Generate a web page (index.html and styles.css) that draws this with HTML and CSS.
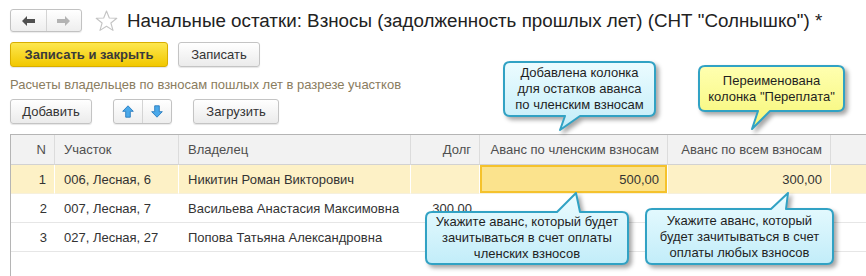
FILE: index.html
```html
<!DOCTYPE html>
<html lang="ru">
<head>
    <meta charset="UTF-8">
    <title>Начальные остатки: Взносы</title>
    <link rel="stylesheet" href="styles.css">
</head>
<body>
    <svg class="defs" width="0" height="0">
        <defs>
            <linearGradient id="fillBlue" x1="0" y1="0" x2="0" y2="1">
                <stop offset="0" stop-color="#ecfcff"/>
                <stop offset="1" stop-color="#c2edf9"/>
            </linearGradient>
            <linearGradient id="fillYellow" x1="0" y1="0" x2="0" y2="1">
                <stop offset="0" stop-color="#ffffb0"/>
                <stop offset="1" stop-color="#f6f677"/>
            </linearGradient>
        </defs>
    </svg>

    <div class="form">
        <div class="title-bar">
            <div class="btn-group nav">
                <span class="seg">
                    <svg width="13" height="10" viewBox="0 0 13 10"><path d="M0 5 L5 0 V3 H13 V7 H5 V10 Z" fill="#505050"/></svg>
                </span>
                <span class="seg">
                    <svg width="13" height="10" viewBox="0 0 13 10"><path d="M13 5 L8 0 V3 H0 V7 H8 V10 Z" fill="#b3b3b3"/></svg>
                </span>
            </div>
            <svg class="star" width="23" height="22" viewBox="0 0 23 22">
                <path d="M11.5 1 L14.3 8 L21.8 8.3 L15.9 13 L18 20.4 L11.5 16.2 L5 20.4 L7.1 13 L1.2 8.3 L8.7 8 Z" fill="#fff" stroke="#c4c4c4" stroke-width="1.1" stroke-linejoin="round"/>
            </svg>
            <h1 class="title">Начальные остатки: Взносы (задолженность прошлых лет) (СНТ "Солнышко") *</h1>
        </div>

        <div class="command-bar">
            <button class="btn default w-158">Записать и закрыть</button>
            <button class="btn w-82">Записать</button>
        </div>

        <div class="group-title">Расчеты владельцев по взносам пошлых лет в разрезе участков</div>

        <div class="toolbar">
            <button class="btn w-82">Добавить</button>
            <div class="btn-group move">
                <span class="seg">
                    <svg width="12" height="13" viewBox="0 0 12 13"><path d="M6 0.8 L11.3 6.3 H8.3 V12.2 H3.7 V6.3 H0.7 Z" fill="#4aa9ea" stroke="#2a7dc0" stroke-width="0.9" stroke-linejoin="round"/></svg>
                </span>
                <span class="seg">
                    <svg width="12" height="13" viewBox="0 0 12 13"><path d="M6 12.2 L11.3 6.7 H8.3 V0.8 H3.7 V6.7 H0.7 Z" fill="#4aa9ea" stroke="#2a7dc0" stroke-width="0.9" stroke-linejoin="round"/></svg>
                </span>
            </div>
            <button class="btn w-86">Загрузить</button>
        </div>

        <div class="grid">
            <table>
                <colgroup>
                    <col class="c-n"><col class="c-plot"><col class="c-owner"><col class="c-debt">
                    <col class="c-adv1"><col class="c-adv2"><col class="c-rest">
                </colgroup>
                <thead>
                    <tr>
                        <th class="num">N</th>
                        <th>Участок</th>
                        <th>Владелец</th>
                        <th class="num">Долг</th>
                        <th class="num">Аванс по членским взносам</th>
                        <th class="num">Аванс по всем взносам</th>
                        <th></th>
                    </tr>
                </thead>
                <tbody>
                    <tr class="selected">
                        <td class="num">1</td>
                        <td>006, Лесная, 6</td>
                        <td>Никитин Роман Викторович</td>
                        <td class="num"></td>
                        <td class="num current">500,00</td>
                        <td class="num">300,00</td>
                        <td></td>
                    </tr>
                    <tr>
                        <td class="num">2</td>
                        <td>007, Лесная, 7</td>
                        <td>Васильева Анастасия Максимовна</td>
                        <td class="num">300,00</td>
                        <td class="num"></td>
                        <td class="num"></td>
                        <td></td>
                    </tr>
                    <tr>
                        <td class="num">3</td>
                        <td>027, Лесная, 27</td>
                        <td>Попова Татьяна Александровна</td>
                        <td class="num"></td>
                        <td class="num"></td>
                        <td class="num"></td>
                        <td></td>
                    </tr>
                </tbody>
            </table>
        </div>
    </div>

    <!-- annotation callouts over the form -->
    <div class="note note-added">
        <svg class="note-shape"><path d="M7 1 H146 Q152 1 152 7 V49 Q152 55 146 55 H77 L57 69 L62 55 H7 Q1 55 1 49 V7 Q1 1 7 1 Z" fill="url(#fillBlue)"/></svg>
        <div class="note-text">Добавлена колонка<br>для остатков аванса<br>по членским взносам</div>
    </div>

    <div class="note note-renamed">
        <svg class="note-shape"><path d="M7 1 H140 Q146 1 146 7 V40 Q146 46 140 46 H72 L54 64 L60 46 H7 Q1 46 1 40 V7 Q1 1 7 1 Z" fill="url(#fillYellow)"/></svg>
        <div class="note-text">Переименована<br>колонка "Переплата"</div>
    </div>

    <div class="note note-member">
        <svg class="note-shape"><path d="M7 1 H132 L151 -18 L155 1 H197 Q203 1 203 7 V47 Q203 53 197 53 H7 Q1 53 1 47 V7 Q1 1 7 1 Z" fill="url(#fillBlue)"/></svg>
        <div class="note-text">Укажите аванс, который будет<br>зачитываться в счет оплаты<br>членских взносов</div>
    </div>

    <div class="note note-any">
        <svg class="note-shape"><path d="M7 1 H126 L143 -15 L141 1 H182 Q188 1 188 7 V50 Q188 56 182 56 H7 Q1 56 1 50 V7 Q1 1 7 1 Z" fill="url(#fillBlue)"/></svg>
        <div class="note-text">Укажите аванс, который<br>будет зачитываться в счет<br>оплаты любых взносов</div>
    </div>
</body>
</html>
```

FILE: styles.css
```css
body {
    margin: 0;
    background: #fff;
    font-family: 'Liberation Sans', Arial, sans-serif;
    font-size: 13px;
    color: #333;
    overflow: hidden;
    position: relative;
    height: 276px;
}

.defs {
    position: absolute;
}

.form {
    padding: 9px 0 0 10px;
}

/* title row */
.title-bar {
    display: flex;
    align-items: center;
    height: 23px;
}

.btn-group {
    display: flex;
    height: 23px;
    box-sizing: border-box;
    border: 1px solid #c2c2c2;
    border-radius: 3px;
    background: linear-gradient(#ffffff, #eeeeee);
    box-shadow: 0 1px 1px rgba(0, 0, 0, 0.08);
}

.btn-group .seg {
    display: flex;
    align-items: center;
    justify-content: center;
}

.btn-group .seg + .seg {
    border-left: 1px solid #d4d4d4;
}

.nav {
    width: 72px;
}

.nav .seg {
    width: 36px;
}

.star {
    margin-left: 13px;
    margin-top: 1px;
}

.title {
    margin: 0 0 0 9px;
    font-size: 18.8px;
    font-weight: normal;
    color: #222;
    white-space: nowrap;
}

/* buttons */
.command-bar,
.toolbar {
    display: flex;
    height: 25px;
}

.command-bar {
    margin-top: 10px;
    gap: 10px;
}

.toolbar {
    margin-top: 6px;
    gap: 21px;
}

.btn {
    height: 25px;
    padding: 0;
    box-sizing: border-box;
    border: 1px solid #c4c4c4;
    border-radius: 3px;
    background: linear-gradient(#ffffff, #ebebeb);
    box-shadow: 0 1px 1px rgba(0, 0, 0, 0.1);
    font-family: inherit;
    font-size: 13px;
    color: #333;
}

.btn.default {
    background: linear-gradient(#fde74f, #f2c800);
    border-color: #d8ae00;
    font-weight: bold;
    color: #3a3a3a;
}

.w-158 { width: 158px; }
.w-82 { width: 82px; }
.w-86 { width: 86px; }

.move {
    width: 59px;
    height: 25px;
}

.move .seg {
    width: 29px;
}

.group-title {
    margin-top: 10px;
    line-height: 16px;
    color: #8a7c5e;
}

/* table */
.grid {
    margin-top: 10px;
    height: 141px;
    overflow: hidden;
    border-top: 1px solid #b5b5b5;
    border-left: 1px solid #b5b5b5;
}

table {
    table-layout: fixed;
    width: 880px;
    border-spacing: 0;
}

.c-n { width: 44px; }
.c-plot { width: 124px; }
.c-owner { width: 232px; }
.c-debt { width: 69px; }
.c-adv1 { width: 188px; }
.c-adv2 { width: 163px; }
.c-rest { width: 60px; }

th, td {
    padding: 0 8px 0 9px;
    white-space: nowrap;
    overflow: hidden;
    text-align: left;
}

th {
    height: 29px;
    background: #f2f2f2;
    border-right: 1px solid #dcdcdc;
    border-bottom: 1px solid #d2d2d2;
    font-weight: normal;
    color: #4f4f4f;
}

td {
    height: 28px;
    border-bottom: 1px solid #e6e6e6;
    color: #333;
}

th.num, td.num {
    text-align: right;
}

tr.selected td {
    background: #fdf1c6;
    border-right: 1px solid #fff;
    border-bottom-color: #f6f0dc;
}

tr.selected td.current {
    background: #fbe38d;
    box-shadow: inset 0 0 0 2px #f5c22c;
}

/* callouts */
.note {
    position: absolute;
    display: flex;
    align-items: center;
    justify-content: center;
}

.note-shape {
    position: absolute;
    left: 0;
    top: 0;
    width: 100%;
    height: 100%;
    overflow: visible;
    filter: drop-shadow(3px 3px 2px rgba(0, 0, 0, 0.35));
}

.note-shape path {
    stroke: #31a2c4;
    stroke-width: 2;
    stroke-linejoin: round;
}

.note-text {
    position: relative;
    text-align: center;
    line-height: 16px;
    color: #1f1f1f;
}

.note-added {
    left: 503px;
    top: 61px;
    width: 153px;
    height: 56px;
}

.note-renamed {
    left: 698px;
    top: 65px;
    width: 147px;
    height: 47px;
}

.note-member {
    left: 425px;
    top: 211px;
    width: 204px;
    height: 54px;
}

.note-any {
    left: 645px;
    top: 208px;
    width: 189px;
    height: 57px;
}
```
